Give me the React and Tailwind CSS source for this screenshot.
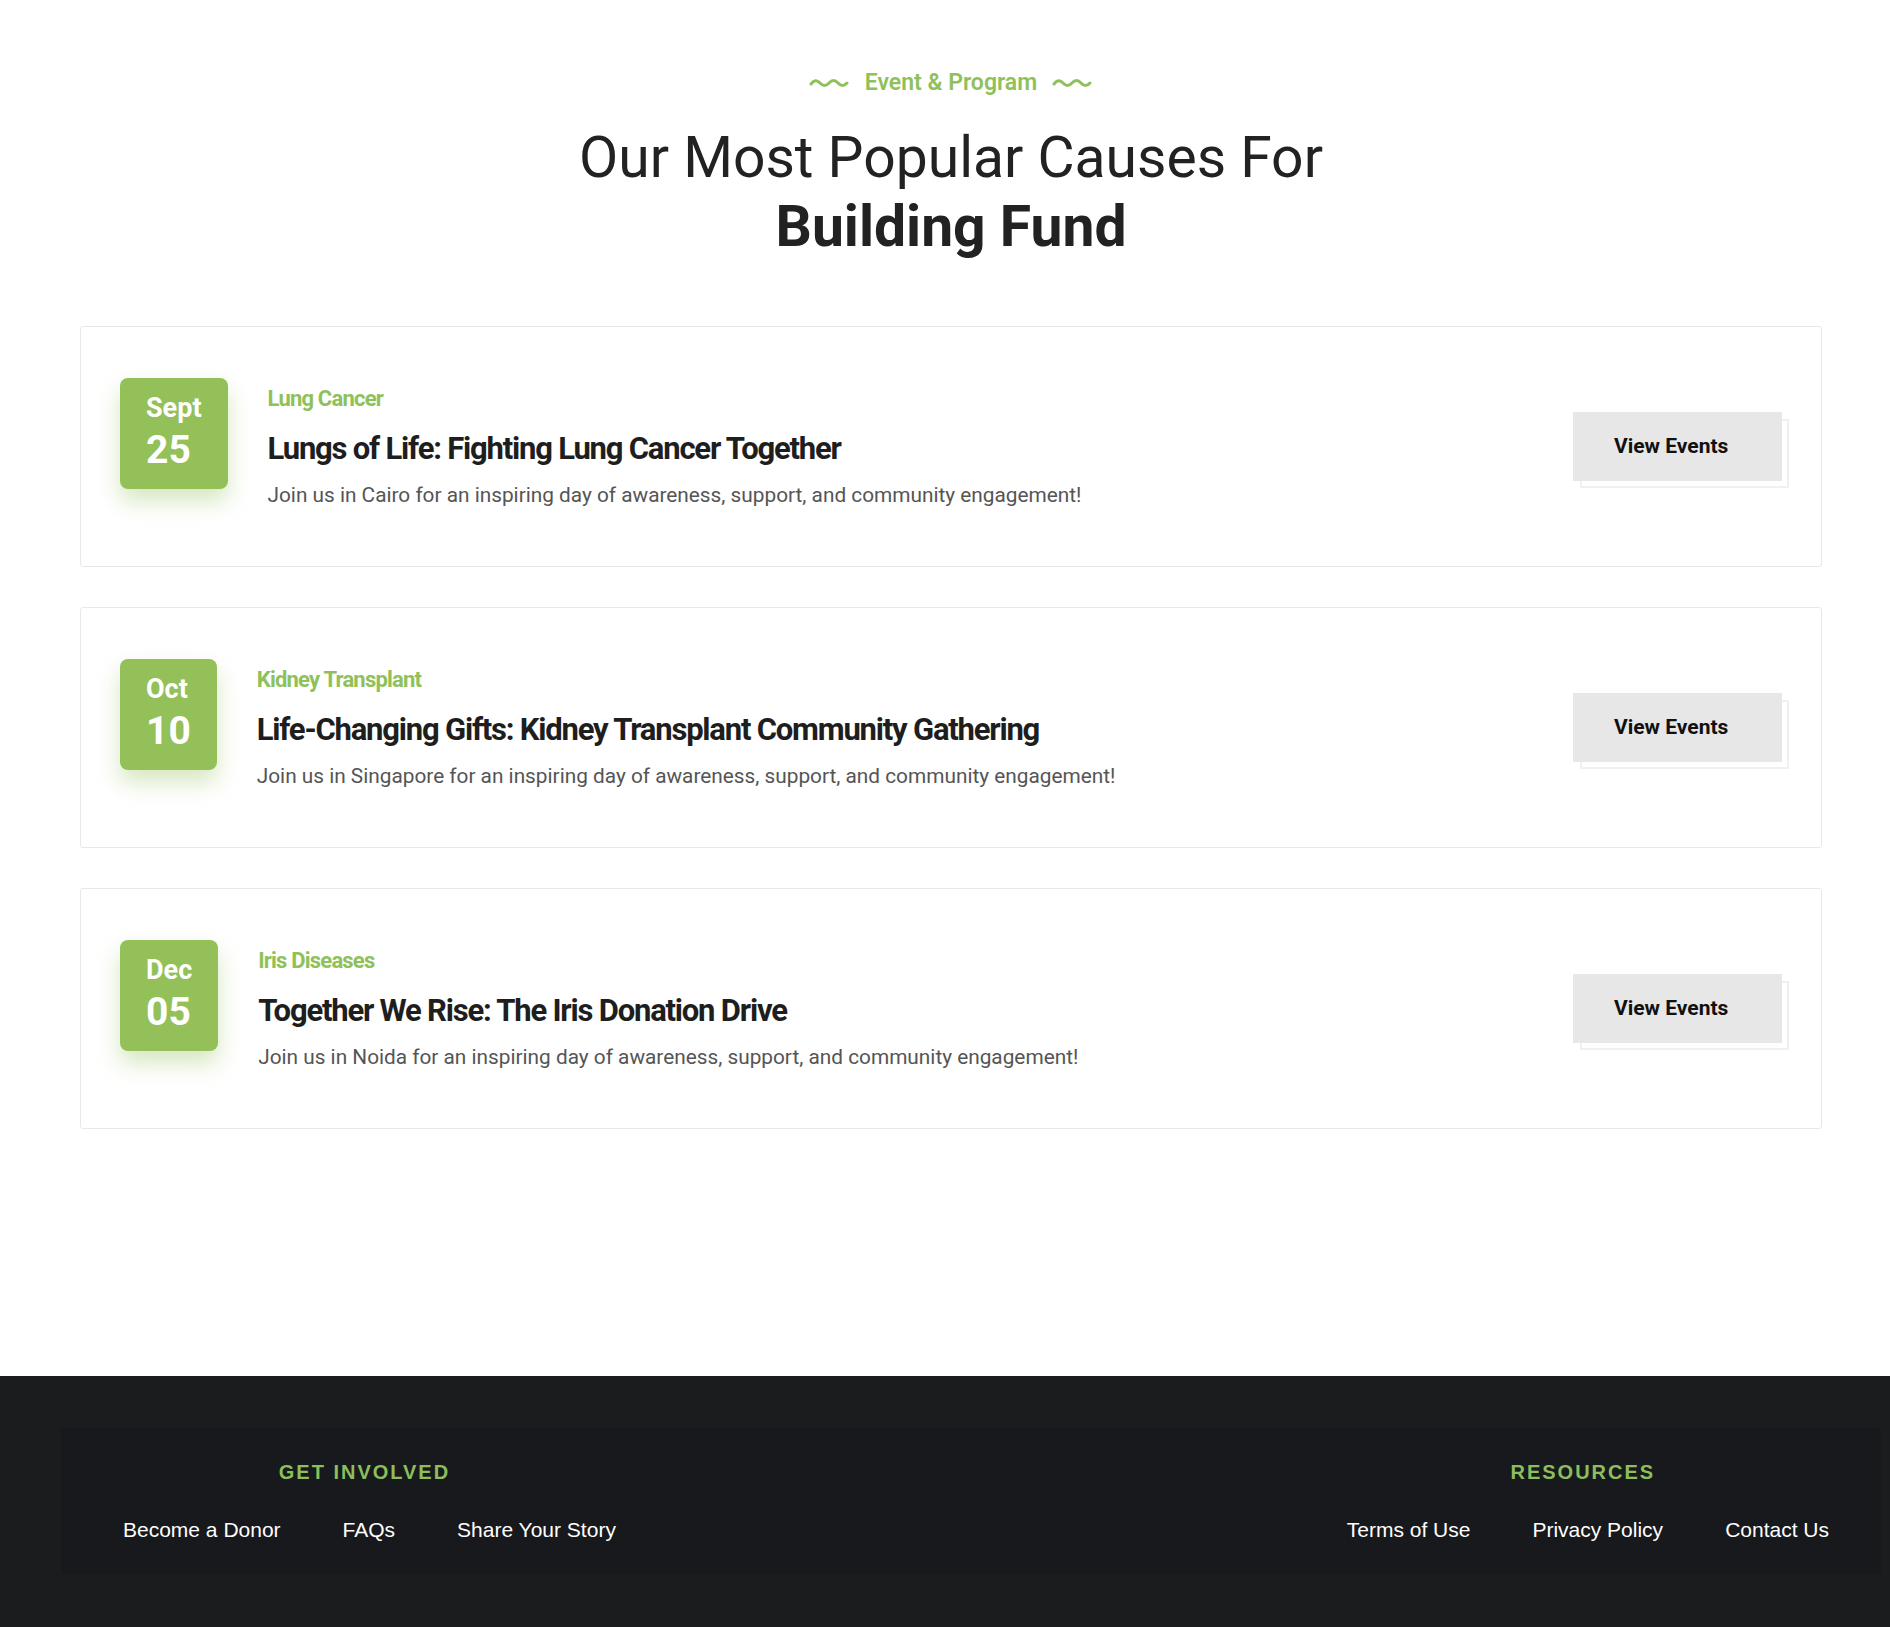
const events = [
  {
    month: "Sept",
    day: "25",
    category: "Lung Cancer",
    title: "Lungs of Life: Fighting Lung Cancer Together",
    text: "Join us in Cairo for an inspiring day of awareness, support, and community engagement!",
  },
  {
    month: "Oct",
    day: "10",
    category: "Kidney Transplant",
    title: "Life-Changing Gifts: Kidney Transplant Community Gathering",
    text: "Join us in Singapore for an inspiring day of awareness, support, and community engagement!",
  },
  {
    month: "Dec",
    day: "05",
    category: "Iris Diseases",
    title: "Together We Rise: The Iris Donation Drive",
    text: "Join us in Noida for an inspiring day of awareness, support, and community engagement!",
  },
];

const involvedLinks = ["Become a Donor", "FAQs", "Share Your Story"];
const resourceLinks = ["Terms of Use", "Privacy Policy", "Contact Us"];

function Wave() {
  return (
    <svg width="41" height="10" viewBox="0 0 41 10" fill="none">
      <path
        d="M2 6 Q6.5 0 11 5 T20 5 T29 5 T38 5"
        stroke="#8fc15b"
        strokeWidth="3"
        strokeLinecap="round"
      />
    </svg>
  );
}

function EventCard({ event }) {
  return (
    <div className="flex items-center justify-between h-[241px] px-[39px] border border-[#e8e8e8] rounded-[3px] bg-white">
      <div className="flex items-start gap-[40px] self-start mt-[51px]">
        <div className="flex flex-col items-start px-[26px] pt-[17px] pb-[19px] rounded-[8px] bg-[#94c05a] text-white font-bold shadow-[0_12px_22px_rgba(148,192,90,0.38)]">
          <div className="text-[27px] leading-[27px]">{event.month}</div>
          <div className="text-[39px] leading-[39px] mt-[9px]">{event.day}</div>
        </div>
        <div className="flex flex-col mt-[8px]">
          <div className="text-[22px] leading-[26px] font-bold tracking-[-0.8px] text-[#8fc15b]">
            {event.category}
          </div>
          <div className="mt-[19px] text-[31px] leading-[36px] font-bold tracking-[-1.2px] text-[#1e1e1e]">
            {event.title}
          </div>
          <div className="mt-[14px] text-[20.8px] leading-[28px] text-[#555]">
            {event.text}
          </div>
        </div>
      </div>
      <div className="relative w-[209px] h-[69px]">
        <div className="absolute left-[7px] top-[7px] w-full h-full border-2 border-[#f0f0f0]" />
        <button className="relative w-full h-full bg-[#e7e7e7] pl-[41px] text-left text-[21px] font-bold text-[#111]">
          View Events
        </button>
      </div>
    </div>
  );
}

function FooterColumn({ heading, links }) {
  return (
    <div className="flex flex-col items-center">
      <div className="pr-[10px] text-[20px] leading-[24px] font-bold tracking-[2px] text-[#8cbf5b]">
        {heading}
      </div>
      <div className="flex gap-[62px] mt-[34px]">
        {links.map((link) => (
          <a key={link} className="text-[21px] leading-[24px] text-white">
            {link}
          </a>
        ))}
      </div>
    </div>
  );
}

export default function App() {
  return (
    <div className="w-[1890px] min-h-[1627px] bg-white flex flex-col font-['Roboto',sans-serif]">
      <section className="flex flex-col items-center pt-[68px] pl-[12px]">
        <div className="flex items-center gap-[15px] h-[30px]">
          <Wave />
          <span className="text-[23px] font-semibold text-[#8fc15b]">Event &amp; Program</span>
          <Wave />
        </div>
        <h2 className="mt-[25px] text-center text-[57px] leading-[69px] text-[#222]">
          Our Most Popular Causes For
          <br />
          <span className="font-bold">Building Fund</span>
        </h2>
      </section>

      <section className="flex flex-col gap-[40px] pl-[80px] pr-[68px] mt-[65px]">
        {events.map((event) => (
          <EventCard key={event.month} event={event} />
        ))}
      </section>

      <footer className="mt-auto h-[251px] bg-[#1b1c1d] pt-[52px] pl-[61px] pr-[9px] font-['Liberation_Sans',Arial,sans-serif]">
        <div className="flex justify-between h-[146px] bg-[#18191c] pl-[62px] pr-[52px] pt-[32px]">
          <FooterColumn heading="GET INVOLVED" links={involvedLinks} />
          <FooterColumn heading="RESOURCES" links={resourceLinks} />
        </div>
      </footer>
    </div>
  );
}
